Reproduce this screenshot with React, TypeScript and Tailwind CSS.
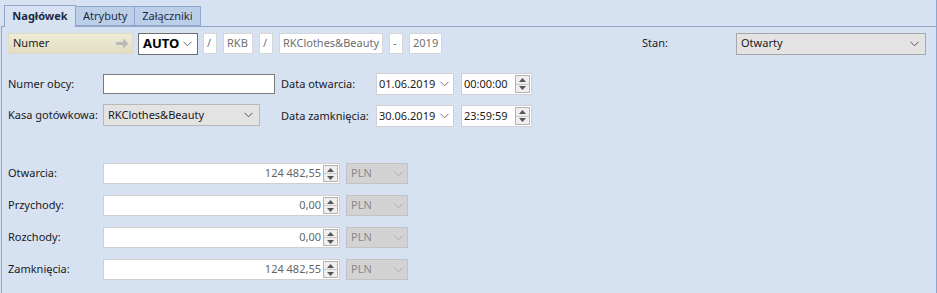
import React from "react";

const font = { fontFamily: '"Noto Sans", "Open Sans", sans-serif' };

const Chevron = ({ className = "" }: { className?: string }) => (
  <svg width="9" height="6" viewBox="0 0 9 6" className={className}>
    <path d="M0.5 0.8 L4.5 4.8 L8.5 0.8" fill="none" stroke="currentColor" strokeWidth="1" />
  </svg>
);

const Spin = () => (
  <div className="flex h-full w-[15px] flex-col border border-[#b4b4b4] bg-[#eeeeee]">
    <div className="flex flex-1 items-center justify-center border-b border-[#c8c8c8]">
      <svg width="7" height="4" viewBox="0 0 7 4">
        <path d="M0 4 L3.5 0 L7 4 Z" fill="#555" />
      </svg>
    </div>
    <div className="flex flex-1 items-center justify-center">
      <svg width="7" height="4" viewBox="0 0 7 4">
        <path d="M0 0 L3.5 4 L7 0 Z" fill="#555" />
      </svg>
    </div>
  </div>
);

const Label = ({ children, w }: { children: React.ReactNode; w: string }) => (
  <div className={`${w} shrink-0 whitespace-nowrap text-[11px] text-[#1a1a1a]`}>{children}</div>
);

const Tab = ({ label, active }: { label: string; active?: boolean }) => (
  <div
    className={
      active
        ? "relative z-10 -mb-px flex h-[22px] w-[72px] items-center justify-center border border-b-0 border-[#8ea6cc] bg-[#d6e2f2] text-[11px] font-bold text-[#1b2a44]"
        : "mt-[2px] flex h-[20px] items-center border border-l-0 border-[#8ea6cc] bg-[#bccfe9] px-[7px] text-[11px] text-[#1b2a44]"
    }
  >
    {label}
  </div>
);

const SmallBox = ({ children, w }: { children: React.ReactNode; w: string }) => (
  <div className={`${w} flex h-[21px] items-center overflow-hidden whitespace-nowrap border border-[#d6d6d6] bg-white px-[3px] text-[11px] text-[#6f6f6f]`}>
    {children}
  </div>
);

const MoneyRow = ({ label, value }: { label: string; value: string }) => (
  <div className="flex h-[21px] items-center">
    <Label w="w-[95px]">{label}</Label>
    <div className="flex h-[21px] w-[237px] items-stretch border border-[#cfcfcf] bg-white">
      <div className="flex flex-1 items-center justify-end pr-[2px] text-[11px] text-[#666]">{value}</div>
      <div className="py-px pr-px">
        <Spin />
      </div>
    </div>
    <div className="ml-[6px] flex h-[21px] w-[62px] items-center justify-between border border-[#c2c2c2] bg-[#d3d3d3] px-[4px] text-[11px] text-[#8a8a8a]">
      <span>PLN</span>
      <Chevron className="text-[#a8a8a8]" />
    </div>
  </div>
);

const DateTime = ({ date, time }: { date: string; time: string }) => (
  <div className="flex h-[22px] items-stretch">
    <div className="flex w-[78px] items-center justify-between border border-[#d0d0d0] bg-white pl-[2px] pr-[4px] text-[11px] text-[#1a1a1a]">
      <span>{date}</span>
      <Chevron className="text-[#777]" />
    </div>
    <div className="ml-[7px] flex w-[71px] items-stretch border border-[#d0d0d0] bg-white">
      <div className="flex flex-1 items-center pl-[2px] text-[11px] text-[#1a1a1a]">{time}</div>
      <div className="py-px pr-px">
        <Spin />
      </div>
    </div>
  </div>
);

export default function App() {
  return (
    <div className="h-[293px] w-[937px] overflow-hidden bg-[#d6e2f2]" style={font}>
      <div className="flex h-full flex-col border-r border-[#8ea6cc]">
        <div className="flex h-[26px] items-end pl-[4px]">
          <Tab label="Nagłówek" active />
          <Tab label="Atrybuty" />
          <Tab label="Załączniki" />
        </div>
        <div className="ml-[1px] flex-1 border-l border-t border-[#8ea6cc] bg-[#d6e2f2] pl-[6px] pt-[6px]">
          {/* Numer row */}
          <div className="flex h-[21px] items-center">
            <div className="flex h-[21px] w-[125px] items-center justify-between border border-[#e0dcc4] bg-gradient-to-b from-[#eeebd6] to-[#e2ddc2] pl-[4px] pr-[3px] text-[11px] text-[#1a1a1a]">
              <span>Numer</span>
              <svg width="13" height="11" viewBox="0 0 13 11">
                <path d="M0 4 H7 V0.5 L12.5 5.5 L7 10.5 V7 H0 Z" fill="#b9b9b9" />
              </svg>
            </div>
            <div className="ml-[5px] flex h-[22px] w-[60px] items-center justify-between border border-[#6e6e6e] bg-white pl-[4px] pr-[5px]">
              <span className="text-[13px] font-bold text-black">AUTO</span>
              <Chevron className="text-[#666]" />
            </div>
            <div className="ml-[5px] flex items-center gap-[6px]">
              <SmallBox w="w-[14px]">/</SmallBox>
              <SmallBox w="w-[30px]">RKB</SmallBox>
              <SmallBox w="w-[14px]">/</SmallBox>
              <SmallBox w="w-[104px]">RKClothes&amp;Beauty</SmallBox>
              <SmallBox w="w-[14px]">-</SmallBox>
              <SmallBox w="w-[33px]">2019</SmallBox>
            </div>
            <div className="ml-[200px] w-[94px] text-[11px] text-[#1a1a1a]">Stan:</div>
            <div className="flex h-[22px] w-[190px] items-center justify-between border border-[#a8a8a8] bg-[#e3e3e3] pl-[4px] pr-[6px] text-[11px] text-[#1a1a1a]">
              <span>Otwarty</span>
              <Chevron className="text-[#555]" />
            </div>
          </div>

          {/* Numer obcy / Kasa + dates */}
          <div className="mt-[19px] flex">
            <div className="flex w-[273px] flex-col gap-[10px] pt-[1px]">
              <div className="flex h-[20px] items-center">
                <Label w="w-[95px]">Numer obcy:</Label>
                <div className="h-[20px] w-[172px] border border-[#7a7a7a] bg-white" />
              </div>
              <div className="flex h-[22px] items-center">
                <Label w="w-[95px]">Kasa gotówkowa:</Label>
                <div className="flex h-[22px] w-[157px] items-center justify-between border border-[#b8b8b8] bg-[#e3e3e3] pl-[4px] pr-[6px] text-[11px] text-[#1a1a1a]">
                  <span>RKClothes&amp;Beauty</span>
                  <Chevron className="text-[#555]" />
                </div>
              </div>
            </div>
            <div className="flex flex-col gap-[10px]">
              <div className="flex items-center">
                <Label w="w-[95px]">Data otwarcia:</Label>
                <DateTime date="01.06.2019" time="00:00:00" />
              </div>
              <div className="flex items-center">
                <Label w="w-[95px]">Data zamknięcia:</Label>
                <DateTime date="30.06.2019" time="23:59:59" />
              </div>
            </div>
          </div>

          {/* Money rows */}
          <div className="mt-[36px] flex flex-col gap-[11px]">
            <MoneyRow label="Otwarcia:" value="124 482,55" />
            <MoneyRow label="Przychody:" value="0,00" />
            <MoneyRow label="Rozchody:" value="0,00" />
            <MoneyRow label="Zamknięcia:" value="124 482,55" />
          </div>
        </div>
      </div>
    </div>
  );
}
